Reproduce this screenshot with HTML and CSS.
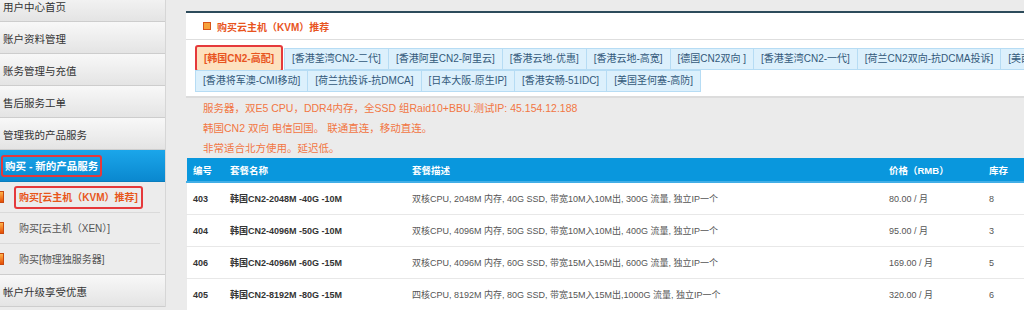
FILE: index.html
```html
<!DOCTYPE html>
<html lang="zh-CN">
<head>
    <meta charset="utf-8">
    <title>购买云主机（KVM）推荐</title>
    <link rel="stylesheet" href="styles.css">
</head>
<body>
    <aside class="sidebar">
        <a class="nav-item">用户中心首页</a>
        <a class="nav-item">账户资料管理</a>
        <a class="nav-item">账务管理与充值</a>
        <a class="nav-item">售后服务工单</a>
        <a class="nav-item">管理我的产品服务</a>
        <a class="nav-item active"><span class="mark">购买 - 新的产品服务</span></a>
        <ul class="sub-nav">
            <li class="current"><i class="bullet"></i><span class="mark">购买[云主机（KVM）推荐]</span></li>
            <li><i class="bullet"></i><span class="mark">购买[云主机（XEN）]</span></li>
            <li><i class="bullet"></i><span class="mark">购买[物理独服务器]</span></li>
        </ul>
        <a class="nav-item">帐户升级享受优惠</a>
    </aside>

    <main class="panel">
        <div class="panel-head"><i class="head-icon"></i>购买云主机（KVM）推荐</div>

        <div class="tabs">
            <a class="tab active">[韩国CN2-高配]</a>
            <a class="tab">[香港荃湾CN2-二代]</a>
            <a class="tab">[香港阿里CN2-阿里云]</a>
            <a class="tab">[香港云地-优惠]</a>
            <a class="tab">[香港云地-高宽]</a>
            <a class="tab">[德国CN2双向 ]</a>
            <a class="tab">[香港荃湾CN2-一代]</a>
            <a class="tab">[荷兰CN2双向-抗DCMA投诉]</a>
            <a class="tab">[美西-洛杉矶CN2]</a>
            <a class="tab">[香港将军澳-CMI移动]</a>
            <a class="tab">[荷兰抗投诉-抗DMCA]</a>
            <a class="tab">[日本大阪-原生IP]</a>
            <a class="tab">[香港安畅-51IDC]</a>
            <a class="tab">[美国圣何塞-高防]</a>
        </div>

        <div class="intro">
            <p>服务器，双E5 CPU，DDR4内存，全SSD 组Raid10+BBU.测试IP: 45.154.12.188</p>
            <p>韩国CN2 双向 电信回国。 联通直连，移动直连。</p>
            <p>非常适合北方使用。延迟低。</p>
        </div>

        <table class="plans">
            <thead>
                <tr>
                    <th class="c-id">编号</th>
                    <th class="c-name">套餐名称</th>
                    <th class="c-desc">套餐描述</th>
                    <th class="c-price">价格（RMB）</th>
                    <th>库存</th>
                </tr>
            </thead>
            <tbody>
                <tr>
                    <td class="strong">403</td>
                    <td class="strong">韩国CN2-2048M -40G -10M</td>
                    <td>双核CPU, 2048M 内存, 40G SSD, 带宽10M入10M出, 300G 流量, 独立IP一个</td>
                    <td>80.00 / 月</td>
                    <td>8</td>
                </tr>
                <tr>
                    <td class="strong">404</td>
                    <td class="strong">韩国CN2-4096M -50G -10M</td>
                    <td>双核CPU, 4096M 内存, 50G SSD, 带宽10M入10M出, 400G 流量, 独立IP一个</td>
                    <td>95.00 / 月</td>
                    <td>3</td>
                </tr>
                <tr>
                    <td class="strong">406</td>
                    <td class="strong">韩国CN2-4096M -60G -15M</td>
                    <td>双核CPU, 4096M 内存, 60G SSD, 带宽15M入15M出, 600G 流量, 独立IP一个</td>
                    <td>169.00 / 月</td>
                    <td>5</td>
                </tr>
                <tr>
                    <td class="strong">405</td>
                    <td class="strong">韩国CN2-8192M -80G -15M</td>
                    <td>四核CPU, 8192M 内存, 80G SSD, 带宽15M入15M出,1000G 流量, 独立IP一个</td>
                    <td>320.00 / 月</td>
                    <td>6</td>
                </tr>
            </tbody>
        </table>
    </main>
</body>
</html>
```

FILE: styles.css
```css
body{
    margin: 0;
    display: flex;
    align-items: flex-start;
    overflow: hidden;
    background-color: #ebebeb;
    font-family: "Liberation Sans", "Noto Sans CJK SC", sans-serif;
    color: #333;
}

/* left menu */
.sidebar{
    width: 166px;
    flex: none;
    margin-top: -10px;
    background-color: #e9e9e9;
    border-right: 1px solid #d6d6d6;
    box-sizing: border-box;
}
.nav-item{
    display: block;
    height: 32px;
    line-height: 35px;
    overflow: hidden;
    padding-left: 3px;
    box-sizing: border-box;
    font-size: 10.5px;
    color: #333;
    background: linear-gradient(#f8f8f8, #e4e4e4);
    border-bottom: 1px solid #cdcdcd;
}
.nav-item.active{
    display: flex;
    align-items: center;
    padding-left: 1px;
    overflow: visible;
    color: white;
    font-weight: bold;
    background: linear-gradient(#1ba6ea, #0a88cf);
    border-bottom: 1px solid #0a7dbd;
}
.nav-item.active .mark{
    line-height: 16px;
    padding: 1px 2px;
    border: 2px solid #e5393b;
    border-radius: 3px;
}
.sub-nav{
    list-style: none;
    margin: 0;
    padding: 0;
    background-color: #ececec;
}
.sub-nav li{
    display: flex;
    align-items: center;
    height: 31px;
    width: 160px;
    border-bottom: 1px solid #dadada;
    box-sizing: border-box;
    font-size: 10px;
    color: #555;
}
.sub-nav li:last-child{
    width: auto;
    border-bottom: 1px solid #cdcdcd;
}
.bullet{
    width: 10px;
    height: 12px;
    margin-left: -6px;
    margin-right: 10px;
    background: linear-gradient(#ffb24a, #e54f06);
    border: 1px solid #c84a10;
    box-sizing: border-box;
}
.sub-nav .mark{
    padding: 2px 3px;
    line-height: 15px;
    border: 2px solid transparent;
    border-radius: 3px;
}
.sub-nav .current .mark{
    color: #e8561a;
    font-weight: bold;
    border-color: #e5393b;
}

/* main box */
.panel{
    flex: none;
    width: 1000px;
    margin-left: 20px;
    margin-top: 11px;
    background-color: white;
    border-top: 2px solid #2d4b5b;
}
.panel-head{
    display: flex;
    align-items: center;
    height: 26px;
    padding-left: 17px;
    border-bottom: 1px solid #dedede;
    font-size: 10px;
    font-weight: bold;
    color: #e8541e;
}
.head-icon{
    width: 6px;
    height: 6px;
    margin-right: 6px;
    background-color: #f7a23b;
    border: 1px solid #d9541a;
}
.tabs{
    display: flex;
    flex-wrap: wrap;
    padding: 8px 9px 5px;
    border-bottom: 2px solid #dcdcdc;
}
.tab{
    height: 22px;
    line-height: 20px;
    padding: 0 7px;
    box-sizing: border-box;
    font-size: 10px;
    color: #33597a;
    background-color: #dcf0fc;
    border: 1px solid #b6dcf4;
    margin: 0 -1px -1px 0;
    white-space: nowrap;
}
.tab.active{
    height: 27px;
    line-height: 23px;
    margin: -3px 1px -2px 0;
    font-weight: bold;
    color: #e8541e;
    background-color: #fde1be;
    border: 2px solid #e5393b;
    border-radius: 3px;
}
.intro{
    padding: 0 17px;
    background-color: #ebebeb;
    font-size: 10.5px;
    color: #f27643;
}
.intro p{
    margin: 0;
    line-height: 20px;
}

/* plan table */
.plans{
    width: 100%;
    border-collapse: collapse;
    border-left: 1px solid #ebebeb;
}
.plans th{
    height: 23px;
    padding: 0 6px;
    text-align: left;
    font-size: 9.5px;
    color: white;
    background-color: #0997dd;
    border-bottom: 2px solid #42aee6;
}
.plans td{
    height: 31px;
    padding: 0 6px;
    font-size: 9px;
    color: #555;
    border-bottom: 1px solid #e8e8e8;
}
.plans td.strong{
    font-weight: bold;
    color: #333;
}
.c-id{ width: 25px; }
.c-name{ width: 170px; }
.c-desc{ width: 465px; }
.c-price{ width: 88px; }
```
